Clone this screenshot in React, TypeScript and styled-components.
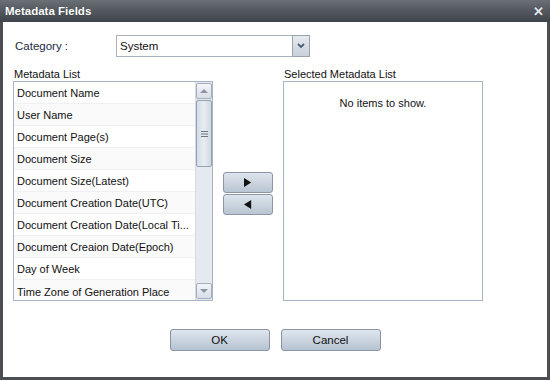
import React from 'react';
import styled, { createGlobalStyle } from 'styled-components';

const GlobalStyle = createGlobalStyle`
  html, body {
    margin: 0;
    padding: 0;
    background: #ffffff;
  }
  body {
    font-family: 'Liberation Sans', Arial, sans-serif;
    font-size: 11px;
    color: #111;
  }
`;

const Window = styled.div`
  width: 550px;
  height: 380px;
  display: flex;
  flex-direction: column;
  box-sizing: border-box;
  background: #4b4e53;
`;

const TitleBar = styled.div`
  height: 22px;
  flex: none;
  display: flex;
  align-items: center;
  justify-content: space-between;
  padding: 0 6px 0 5px;
  background: linear-gradient(#6b7077 0%, #555a61 45%, #40444a 100%);
  color: #fff;
  font-weight: bold;
  font-size: 11.5px;
  text-shadow: 0 0 1px rgba(0, 0, 0, 0.4);
`;

const CloseIcon = styled.span`
  font-size: 13px;
  font-weight: bold;
  color: #e3e8ef;
  line-height: 1;
`;

const Body = styled.div`
  flex: 1;
  margin: 0 3px 3px 3px;
  background: #fff;
  padding: 13px 10px 0 10px;
  display: flex;
  flex-direction: column;
`;

const CategoryRow = styled.div`
  display: flex;
  align-items: center;
  height: 22px;
  padding-left: 2px;
`;

const FieldLabel = styled.label`
  width: 101px;
  color: #1b2a45;
  font-size: 11.5px;
`;

const Combo = styled.div`
  display: flex;
  width: 194px;
  height: 22px;
  box-sizing: border-box;
`;

const ComboInput = styled.div`
  flex: 1;
  border: 1px solid #a9b1bd;
  border-right: none;
  display: flex;
  align-items: center;
  padding-left: 3px;
  font-size: 11.5px;
`;

const ComboTrigger = styled.div`
  width: 18px;
  border: 1px solid #9aa2ae;
  background: linear-gradient(#e6eaef, #c9d0d9);
  display: flex;
  align-items: center;
  justify-content: center;
  box-sizing: border-box;
`;

const Lists = styled.div`
  display: flex;
  margin-top: 11px;
`;

const Column = styled.div`
  display: flex;
  flex-direction: column;
  width: 200px;
`;

const ListLabel = styled.div`
  height: 13px;
  line-height: 13px;
  font-size: 11px;
  padding-left: 1px;
`;

const ListBox = styled.div`
  height: 220px;
  box-sizing: border-box;
  border: 1px solid #a7b4c6;
  display: flex;
  background: #fff;
`;

const Rows = styled.div`
  flex: 1;
  display: flex;
  flex-direction: column;
  overflow: hidden;
`;

const Row = styled.div<{ alt?: boolean }>`
  height: 22px;
  flex: none;
  box-sizing: border-box;
  border-bottom: 1px solid #eef0f3;
  background: ${(p) => (p.alt ? '#fafafa' : '#fff')};
  display: flex;
  align-items: center;
  padding: 1px 0 0 3px;
  white-space: nowrap;
  font-size: 11px;
  &:last-child {
    border-bottom: none;
  }
`;

const ScrollBar = styled.div`
  width: 16px;
  flex: none;
  display: flex;
  flex-direction: column;
  background: #e5eaf1;
  border-left: 1px solid #d3dae4;
`;

const ScrollButton = styled.div`
  height: 16px;
  flex: none;
  box-sizing: border-box;
  border: 1px solid #a4afbd;
  border-radius: 2px;
  background: linear-gradient(#f3f5f8, #d8dee6);
  display: flex;
  align-items: center;
  justify-content: center;
  margin: 1px 0;
`;

const Thumb = styled.div`
  height: 67px;
  flex: none;
  box-sizing: border-box;
  border: 1px solid #97a3b3;
  border-radius: 2px;
  background: linear-gradient(90deg, #d5dce6, #e9edf2 50%, #d0d8e2);
  display: flex;
  align-items: center;
  justify-content: center;
`;

const Spacer = styled.div`
  flex: 1;
`;

const Mover = styled.div`
  width: 50px;
  margin: 0 10px 0 10px;
  display: flex;
  flex-direction: column;
  gap: 1px;
  padding-top: 104px;
`;

const MoveButton = styled.button`
  height: 21px;
  padding: 0;
  border: 1px solid #8d96a3;
  border-radius: 3px;
  background: linear-gradient(#dde4ec, #b9c5d3);
  display: flex;
  align-items: center;
  justify-content: center;
  cursor: pointer;
`;

const EmptyText = styled.div`
  flex: 1;
  text-align: center;
  padding-top: 15px;
  font-size: 11px;
`;

const Footer = styled.div`
  display: flex;
  justify-content: center;
  gap: 11px;
  margin-top: 28px;
`;

const DialogButton = styled.button`
  width: 100px;
  height: 22px;
  border: 1px solid #8a939f;
  border-radius: 3px;
  background: linear-gradient(#dfe6ee, #b6c3d2);
  font-family: 'Liberation Sans', Arial, sans-serif;
  font-size: 11.5px;
  color: #111;
  cursor: pointer;
`;

const fields = [
  'Document Name',
  'User Name',
  'Document Page(s)',
  'Document Size',
  'Document Size(Latest)',
  'Document Creation Date(UTC)',
  'Document Creation Date(Local Ti...',
  'Document Creaion Date(Epoch)',
  'Day of Week',
  'Time Zone of Generation Place',
];

type TriProps = { dir: 'up' | 'down' | 'left' | 'right'; color?: string; size?: number };

const Tri = ({ dir, color = '#7a8493', size = 5 }: TriProps) => {
  const s = size;
  const pts =
    dir === 'up'
      ? `0,${s} ${s},0 ${s * 2},${s}`
      : dir === 'down'
      ? `0,0 ${s * 2},0 ${s},${s}`
      : dir === 'right'
      ? `0,0 ${s * 1.6},${s} 0,${s * 2}`
      : `${s * 1.6},0 0,${s} ${s * 1.6},${s * 2}`;
  const horiz = dir === 'left' || dir === 'right';
  return (
    <svg width={horiz ? s * 1.6 : s * 2} height={horiz ? s * 2 : s}>
      <polygon points={pts} fill={color} />
    </svg>
  );
};

const App = (): JSX.Element => {
  return (
    <>
      <GlobalStyle />
      <Window>
        <TitleBar>
          <span>Metadata Fields</span>
          <CloseIcon>✕</CloseIcon>
        </TitleBar>
        <Body>
          <CategoryRow>
            <FieldLabel>Category :</FieldLabel>
            <Combo>
              <ComboInput>System</ComboInput>
              <ComboTrigger>
                <svg width="8" height="6" viewBox="0 0 8 6">
                  <polyline points="1,1 4,4 7,1" fill="none" stroke="#4e5d78" strokeWidth="1.8" />
                </svg>
              </ComboTrigger>
            </Combo>
          </CategoryRow>
          <Lists>
            <Column>
              <ListLabel>Metadata List</ListLabel>
              <ListBox>
                <Rows>
                  {fields.map((f, i) => (
                    <Row key={f} alt={i % 2 === 1}>
                      {f}
                    </Row>
                  ))}
                </Rows>
                <ScrollBar>
                  <ScrollButton>
                    <Tri dir="up" size={4} color="#8b95a3" />
                  </ScrollButton>
                  <Thumb>
                    <svg width="7" height="6">
                      <rect x="0" y="0" width="7" height="1" fill="#6d7786" />
                      <rect x="0" y="2.5" width="7" height="1" fill="#6d7786" />
                      <rect x="0" y="5" width="7" height="1" fill="#6d7786" />
                    </svg>
                  </Thumb>
                  <Spacer />
                  <ScrollButton>
                    <Tri dir="down" size={4} color="#8b95a3" />
                  </ScrollButton>
                </ScrollBar>
              </ListBox>
            </Column>
            <Mover>
              <MoveButton>
                <Tri dir="right" size={4.5} color="#111" />
              </MoveButton>
              <MoveButton>
                <Tri dir="left" size={4.5} color="#111" />
              </MoveButton>
            </Mover>
            <Column>
              <ListLabel>Selected Metadata List</ListLabel>
              <ListBox>
                <EmptyText>No items to show.</EmptyText>
              </ListBox>
            </Column>
          </Lists>
          <Footer>
            <DialogButton>OK</DialogButton>
            <DialogButton>Cancel</DialogButton>
          </Footer>
        </Body>
      </Window>
    </>
  );
};

export default App;
